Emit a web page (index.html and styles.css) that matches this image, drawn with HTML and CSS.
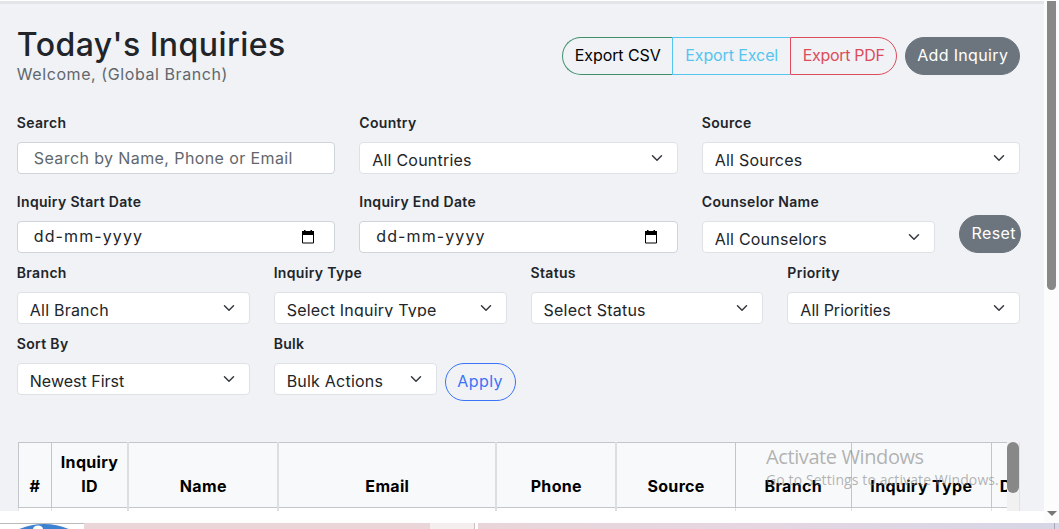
FILE: index.html
```html
<!DOCTYPE html>
<html lang="en">
<head>
    <meta charset="UTF-8">
    <meta name="viewport" content="width=device-width, initial-scale=1.0">
    <title>Today's Inquiries</title>
    <link rel="stylesheet" href="styles.css">
</head>
<body>

    <div class="page">
        <main class="content">
            <header class="page-header">
                <div>
                    <h1>Today's Inquiries</h1>
                    <p class="welcome">Welcome, (Global Branch)</p>
                </div>
                <div class="actions">
                    <div class="btn-group">
                        <button class="btn btn-csv">Export CSV</button>
                        <button class="btn btn-excel">Export Excel</button>
                        <button class="btn btn-pdf">Export PDF</button>
                    </div>
                    <button class="btn btn-secondary btn-add">Add Inquiry</button>
                </div>
            </header>

            <form class="filters">
                <div class="field col-4">
                    <label>Search</label>
                    <div class="control input"><span>Search by Name, Phone or Email</span></div>
                </div>
                <div class="field col-4">
                    <label>Country</label>
                    <div class="control select"><span>All Countries</span><svg class="chevron" viewBox="0 0 16 16"><path d="m2 5 6 6 6-6"/></svg></div>
                </div>
                <div class="field col-4">
                    <label>Source</label>
                    <div class="control select"><span>All Sources</span><svg class="chevron" viewBox="0 0 16 16"><path d="m2 5 6 6 6-6"/></svg></div>
                </div>

                <div class="field col-4 tight">
                    <label>Inquiry Start Date</label>
                    <div class="control input date"><span>dd-mm-yyyy</span><svg class="calendar" viewBox="0 0 14 14"><path d="M1.5 2h11v11h-11z"/><path class="fill" d="M1 1h12v4H1zM3 0h1.5v2H3zM9.500 0H11v2H9.500z"/></svg></div>
                </div>
                <div class="field col-4 tight">
                    <label>Inquiry End Date</label>
                    <div class="control input date"><span>dd-mm-yyyy</span><svg class="calendar" viewBox="0 0 14 14"><path d="M1.5 2h11v11h-11z"/><path class="fill" d="M1 1h12v4H1zM3 0h1.5v2H3zM9.500 0H11v2H9.500z"/></svg></div>
                </div>
                <div class="field col-3 tight">
                    <label>Counselor Name</label>
                    <div class="control select"><span>All Counselors</span><svg class="chevron" viewBox="0 0 16 16"><path d="m2 5 6 6 6-6"/></svg></div>
                </div>
                <div class="col-1 reset-col">
                    <button type="button" class="btn btn-secondary btn-reset">Reset</button>
                </div>

                <div class="field col-3 tight">
                    <label>Branch</label>
                    <div class="control select"><span>All Branch</span><svg class="chevron" viewBox="0 0 16 16"><path d="m2 5 6 6 6-6"/></svg></div>
                </div>
                <div class="field col-3 tight">
                    <label>Inquiry Type</label>
                    <div class="control select"><span class="clip">Select Inquiry Type</span><svg class="chevron" viewBox="0 0 16 16"><path d="m2 5 6 6 6-6"/></svg></div>
                </div>
                <div class="field col-3 tight">
                    <label>Status</label>
                    <div class="control select"><span>Select Status</span><svg class="chevron" viewBox="0 0 16 16"><path d="m2 5 6 6 6-6"/></svg></div>
                </div>
                <div class="field col-3 tight">
                    <label>Priority</label>
                    <div class="control select narrow"><span>All Priorities</span><svg class="chevron" viewBox="0 0 16 16"><path d="m2 5 6 6 6-6"/></svg></div>
                </div>

                <div class="field col-3 tight">
                    <label>Sort By</label>
                    <div class="control select narrow"><span>Newest First</span><svg class="chevron" viewBox="0 0 16 16"><path d="m2 5 6 6 6-6"/></svg></div>
                </div>
                <div class="field col-4 tight">
                    <label>Bulk</label>
                    <div class="bulk">
                        <div class="control select"><span>Bulk Actions</span><svg class="chevron" viewBox="0 0 16 16"><path d="m2 5 6 6 6-6"/></svg></div>
                        <button type="button" class="btn btn-apply">Apply</button>
                    </div>
                </div>
            </form>

            <div class="table-wrap">
                <table>
                    <colgroup>
                        <col class="c-num"><col class="c-id"><col class="c-name"><col class="c-email"><col class="c-phone"><col class="c-source"><col class="c-branch"><col class="c-type"><col class="c-date">
                    </colgroup>
                    <thead>
                        <tr>
                            <th>#</th>
                            <th>Inquiry ID</th>
                            <th class="thick">Name</th>
                            <th class="thick">Email</th>
                            <th class="thick">Phone</th>
                            <th class="thick">Source</th>
                            <th>Branch</th>
                            <th>Inquiry Type</th>
                            <th class="cut">Date</th>
                        </tr>
                    </thead>
                    <tbody>
                        <tr><td></td><td></td><td class="thick"></td><td class="thick"></td><td class="thick"></td><td class="thick"></td><td></td><td></td><td></td></tr>
                    </tbody>
                </table>
                <div class="table-scroll"><div class="table-thumb"></div></div>
            </div>
        </main>
        <aside class="scrollbar">
            <div class="thumb"></div>
            <div class="arrow"></div>
        </aside>
    </div>

    <footer class="strip">
        <div class="strip-icon">
            <svg viewBox="0 0 84 6"><ellipse cx="44" cy="15" rx="33" ry="15"/><ellipse class="light" cx="38" cy="5" rx="5" ry="3.500"/></svg>
        </div>
        <div class="strip-a"></div>
        <div class="strip-gap"></div>
        <div class="strip-b"></div>
        <div class="strip-end"></div>
    </footer>

    <div class="watermark">
        <p class="wm-title">Activate Windows</p>
        <p class="wm-text">Go to Settings to activate Windows.</p>
    </div>

</body>
</html>
```

FILE: styles.css
```css
* {
    box-sizing: border-box;
}
body {
    margin: 0;
    height: 529px;
    overflow: hidden;
    background: #fff;
    color: #212529;
    font-family: Inter, "Noto Sans", sans-serif;
    font-size: 16px;
    line-height: 24px;
}
h1, p {
    margin: 0;
}
.page {
    display: flex;
    height: 523px;
    padding-top: 1px;
    overflow: hidden;
}
.content {
    width: 1044px;
    height: 510px;
    padding: 24px 23.8px 0 16.8px;
    background: #f0f2f6;
    border-top: 3px solid #e3e6e9;
    overflow: hidden;
}
.page-header {
    display: flex;
    justify-content: space-between;
    height: 84px;
}
h1 {
    font-size: 32px;
    font-weight: 500;
    line-height: 34px;
    letter-spacing: 0.45px;
}
.welcome {
    line-height: 24px;
    color: #61676c;
    letter-spacing: 0.58px;
}
.actions {
    display: flex;
    gap: 8px;
    padding-top: 9px;
}
.btn-group {
    display: flex;
}
.btn {
    height: 38px;
    padding: 0 0 2px;
    border: 1px solid;
    border-radius: 19px;
    background: transparent;
    font: inherit;
    white-space: nowrap;
}
.btn-csv {
    width: 110px;
    border-color: #3f8f6b;
    border-right: 0;
    border-radius: 19px 0 0 19px;
    color: #000;
    letter-spacing: -0.1px;
}
.btn-excel {
    width: 118px;
    border-color: #54c5ef;
    border-right: 0;
    border-radius: 0;
    color: #54c5ef;
    letter-spacing: -0.1px;
}
.btn-pdf {
    width: 107px;
    border-color: #dc4c5a;
    border-radius: 0 19px 19px 0;
    color: #dc4c5a;
    letter-spacing: -0.3px;
}
.btn-secondary {
    background: #6c757d;
    border-color: #6c757d;
    color: #fff;
}
.btn-add {
    width: 115px;
    letter-spacing: 0.35px;
}
.filters {
    display: grid;
    grid-template-columns: repeat(12, minmax(0, 1fr));
    column-gap: 24px;
}
.col-4 {
    grid-column: span 4;
}
.col-3 {
    grid-column: span 3;
}
.col-1 {
    grid-column: span 1;
}
.field {
    height: 79px;
    min-width: 0;
}
.field.tight {
    height: 71px;
}
.filters .reset-col {
    height: 71px;
    padding-top: 24px;
}
label {
    display: block;
    height: 30px;
    line-height: 21px;
    font-size: 14px;
    font-weight: 600;
    letter-spacing: 0.33px;
}
.control {
    display: flex;
    height: 32px;
    border: 1px solid #dee2e6;
    border-radius: 4px;
    background: #fff;
}
.input {
    padding: 0 16px;
    border-color: #ced4da;
    line-height: 31px;
    color: #61676c;
    letter-spacing: 0.4px;
}
.date {
    justify-content: space-between;
    line-height: 29px;
    color: #212529;
    letter-spacing: 1.1px;
}
.select {
    justify-content: space-between;
    padding: 5px 12px 0;
    letter-spacing: 0.22px;
}
.select.narrow {
    letter-spacing: 0;
}
.select span {
    line-height: 25px;
    white-space: nowrap;
}
.select .clip {
    height: 19px;
    overflow: hidden;
}
.chevron {
    width: 16px;
    height: 12px;
    margin-top: 4px;
    fill: none;
    stroke: #343a40;
    stroke-width: 2;
    stroke-linecap: round;
    stroke-linejoin: round;
}
.calendar {
    width: 14px;
    height: 14px;
    margin: 8px 3px 0 0;
    fill: none;
    stroke: #000;
}
.calendar .fill {
    fill: #000;
    stroke: none;
}
.btn-reset {
    width: 62px;
    padding-left: 12px;
    text-align: left;
    letter-spacing: 0.4px;
}
.bulk {
    display: flex;
    gap: 8px;
}
.bulk .select {
    width: 163px;
}
.btn-apply {
    width: 71px;
    border-color: #3b74f6;
    color: #3b74f6;
    letter-spacing: 0.4px;
}
.table-wrap {
    display: flex;
    height: 80px;
    margin: 38px 0 0 1px;
    overflow: hidden;
}
table {
    flex: none;
    width: 1020px;
    margin-right: -31px;
    border-collapse: collapse;
    table-layout: fixed;
}
.c-num { width: 33px; }
.c-id { width: 77px; }
.c-name { width: 150px; }
.c-email { width: 218px; }
.c-phone { width: 120px; }
.c-source { width: 119px; }
.c-branch { width: 116px; }
.c-type { width: 140px; }
th {
    height: 65px;
    padding: 7px 4px 9px;
    border: 1px solid #c2c5c9;
    background: #f8f9fa;
    color: #000;
    font-weight: 700;
    letter-spacing: 0.33px;
    vertical-align: bottom;
}
td {
    height: 40px;
    border: 1px solid #dee0e2;
    background: #fff;
}
.thick {
    border-left: 2px solid #dcdfe1;
}
.cut {
    padding-left: 8px;
    text-align: left;
}
.table-scroll {
    position: relative;
    width: 13px;
    border-right: 1px solid #dee2e6;
    background: #f1f1f2;
}
.table-thumb {
    width: 12px;
    height: 51px;
    border-radius: 6px;
    background: #888;
}
.scrollbar {
    display: flex;
    flex-direction: column;
    justify-content: space-between;
    align-items: center;
    width: 15px;
    padding-bottom: 7px;
    background: #fcfcfc;
}
.thumb {
    width: 9px;
    height: 289px;
    border-radius: 0 0 5px 5px;
    background: #888;
}
.arrow {
    border: 5px solid transparent;
    border-top-color: #777;
    border-bottom: 0;
}
.strip {
    display: flex;
    height: 6px;
}
.strip-icon {
    width: 84px;
    border-top: 1px solid #bbb;
}
.strip-icon svg {
    display: block;
    width: 84px;
    height: 6px;
}
.strip-icon ellipse {
    fill: #3d82d0;
}
.strip-icon .light {
    fill: #fff;
}
.strip-a {
    width: 346px;
    background: #ead6d9;
}
.strip-gap {
    width: 45px;
    border-right: 1px solid #c9bfc2;
    background: #f5eeee;
}
.strip-b {
    flex: 1;
    margin-left: 3px;
    background: linear-gradient(90deg, #e9d5d9, #e5d6e2 50%, #d6d6e6);
}
.strip-end {
    width: 5px;
    border-left: 1px solid #a9a9b5;
    background: #d6d6e6;
}
.watermark {
    position: absolute;
    left: 766px;
    top: 445px;
    color: rgba(130, 130, 130, 0.6);
    font-family: "Open Sans", sans-serif;
    white-space: nowrap;
}
.wm-title {
    font-size: 20px;
    letter-spacing: -0.4px;
}
.wm-text {
    font-size: 14px;
    line-height: 22px;
    letter-spacing: 0.1px;
}
```
